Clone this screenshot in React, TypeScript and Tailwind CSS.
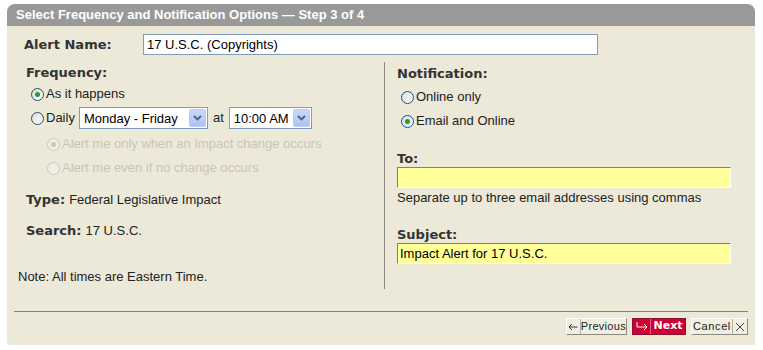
import React from "react";

const body = { fontFamily: '"Liberation Sans", Arial, sans-serif' };
const bold = { fontFamily: '"DejaVu Sans", Verdana, sans-serif' };

function Radio({ checked, disabled }: { checked?: boolean; disabled?: boolean }) {
  return (
    <span
      className={
        "relative inline-flex h-[13px] w-[13px] shrink-0 items-center justify-center rounded-full border " +
        (disabled
          ? "border-[#cac8bb] bg-[#f0efe6]"
          : "border-[#1c5180] bg-gradient-to-br from-[#dcdcd7] to-white")
      }
    >
      {checked && (
        <span
          className={
            "h-[5px] w-[5px] rounded-full " + (disabled ? "bg-[#cac8bb]" : "bg-[#21a121]")
          }
        />
      )}
    </span>
  );
}

function XPSelect({ value, width }: { value: string; width: string }) {
  return (
    <div
      className={
        "flex h-[22px] items-center border border-[#7f9db9] bg-white pl-[4px] pr-[1px] " + width
      }
    >
      <span className="flex-1 whitespace-nowrap text-[13px] leading-none text-black">{value}</span>
      <span className="flex h-[18px] w-[17px] items-center justify-center rounded-[2px] border border-[#b9cdf8] bg-gradient-to-b from-[#cad8fc] to-[#aec3f4]">
        <svg width="9" height="6" viewBox="0 0 9 6">
          <path d="M1 1 L4.5 4.5 L8 1" fill="none" stroke="#4d6185" strokeWidth="1.8" />
        </svg>
      </span>
    </div>
  );
}

export default function App() {
  return (
    <div className="h-[350px] w-[763px] bg-white pl-[7px] pt-[4px]" style={body}>
      <div className="flex h-[341px] w-[748px] flex-col rounded-t-[8px] rounded-bl-[4px] bg-[#ece9d8]">
        <div
          className="flex h-[22px] items-center rounded-t-[8px] bg-[#999999] pl-[9px] text-[13px] font-bold text-white"
          style={body}
        >
          Select Frequency and Notification Options — Step 3 of 4
        </div>

        <div className="mt-[8px] flex h-[21px] items-center">
          <span className="w-[136px] pl-[17px] text-[13px] font-bold text-[#333]" style={bold}>
            Alert Name:
          </span>
          <div className="flex h-[21px] w-[455px] items-center border border-[#7f9db9] bg-white pl-[3px] text-[13px] text-black">
            17 U.S.C. (Copyrights)
          </div>
        </div>

        <div className="mt-[7px] flex h-[227px]">
          <div className="flex w-[378px] flex-col border-r border-[#8d8b80] text-[13px] text-[#222]">
            <div className="mt-[1px] flex h-[20px] items-center pl-[19px] text-[13px] font-bold text-[#333]" style={bold}>
              Frequency:
            </div>
            <div className="mt-[1px] flex h-[20px] items-center gap-[2px] pl-[24px]">
              <Radio checked />
              <span>As it happens</span>
            </div>
            <div className="mt-[3px] flex h-[22px] items-center pl-[24px]">
              <Radio />
              <span className="ml-[2px] mr-[4px]">Daily</span>
              <XPSelect value="Monday - Friday" width="w-[129px]" />
              <span className="mx-[5px]">at</span>
              <XPSelect value="10:00 AM" width="w-[83px]" />
            </div>
            <div className="mt-[5px] flex h-[20px] items-center gap-[2px] pl-[40px] text-[#c9c6b5]">
              <Radio checked disabled />
              <span>Alert me only when an Impact change occurs</span>
            </div>
            <div className="mt-[4px] flex h-[20px] items-center gap-[2px] pl-[40px] text-[#c9c6b5]">
              <Radio disabled />
              <span>Alert me even if no change occurs</span>
            </div>
            <div className="mt-[12px] flex h-[20px] items-center pl-[19px]">
              <span className="mr-[4px] font-bold text-[#333]" style={bold}>Type:</span>
              <span>Federal Legislative Impact</span>
            </div>
            <div className="mt-[11px] flex h-[20px] items-center pl-[19px]">
              <span className="mr-[4px] font-bold text-[#333]" style={bold}>Search:</span>
              <span>17 U.S.C.</span>
            </div>
            <div className="mt-[26px] flex h-[20px] items-center pl-[11px]">
              Note: All times are Eastern Time.
            </div>
          </div>

          <div className="flex flex-col pl-[12px] text-[13px] text-[#222]">
            <div className="mt-[2px] flex h-[20px] items-center font-bold text-[#333]" style={bold}>
              Notification:
            </div>
            <div className="mt-[3px] flex h-[20px] items-center gap-[2px] pl-[4px]">
              <Radio />
              <span>Online only</span>
            </div>
            <div className="mt-[4px] flex h-[20px] items-center gap-[2px] pl-[4px]">
              <Radio checked />
              <span>Email and Online</span>
            </div>
            <div className="mt-[18px] flex h-[18px] items-end font-bold leading-none text-[#333]" style={bold}>
              <span className="pb-[2px]">To:</span>
            </div>
            <div className="h-[21px] w-[334px] border border-t-[#808080] border-l-[#808080] border-b-white border-r-white bg-[#ffff99]" />
            <div className="mt-[1px] flex h-[18px] items-center">
              Separate up to three email addresses using commas
            </div>
            <div className="mt-[18px] flex h-[18px] items-end font-bold leading-none text-[#333]" style={bold}>
              <span className="pb-[2px]">Subject:</span>
            </div>
            <div className="flex h-[21px] w-[334px] items-center border border-t-[#808080] border-l-[#808080] border-b-white border-r-white bg-[#ffff99] pl-[2px] text-black">
              Impact Alert for 17 U.S.C.
            </div>
          </div>
        </div>

        <div className="mx-[7px] mt-[22px] h-[1px] bg-[#808080]" />

        <div className="mr-[7px] mt-[6px] flex justify-end gap-[5px] text-[11px]" style={body}>
          <div className="flex h-[17px] w-[61px] items-stretch border border-t-white border-l-white border-b-[#8a8a80] border-r-[#8a8a80] bg-[#f1efe2] text-[#222]">
            <span className="flex w-[15px] items-center justify-center border-r border-[#b5b3a5]">
              <svg width="10" height="8" viewBox="0 0 10 8">
                <path d="M9.5 4 H1 M4 1 L1 4 L4 7" fill="none" stroke="#333" strokeWidth="1" />
              </svg>
            </span>
            <span className="flex flex-1 items-center justify-center whitespace-nowrap tracking-[0.3px]">Previous</span>
          </div>
          <div className="flex h-[17px] w-[54px] items-stretch border border-[#8e1030] bg-[#cc0033] text-white">
            <span className="flex w-[18px] items-center justify-center border-r border-[#f06080]">
              <svg width="12" height="9" viewBox="0 0 12 9">
                <path d="M1 0 V5 H11 M8 2 L11 5 L8 8" fill="none" stroke="#fff" strokeWidth="1" />
              </svg>
            </span>
            <span className="flex flex-1 items-center justify-center font-bold" style={bold}>Next</span>
          </div>
          <div className="flex h-[17px] w-[57px] items-stretch border border-t-white border-l-white border-b-[#8a8a80] border-r-[#8a8a80] bg-[#f1efe2] text-[#222]">
            <span className="flex flex-1 items-center justify-center whitespace-nowrap tracking-[0.6px]">Cancel</span>
            <span className="flex w-[15px] items-center justify-center border-l border-[#b5b3a5]">
              <svg width="10" height="10" viewBox="0 0 10 10">
                <path d="M1 1 L9 9 M9 1 L1 9" fill="none" stroke="#444" strokeWidth="1" />
              </svg>
            </span>
          </div>
        </div>
      </div>
    </div>
  );
}
